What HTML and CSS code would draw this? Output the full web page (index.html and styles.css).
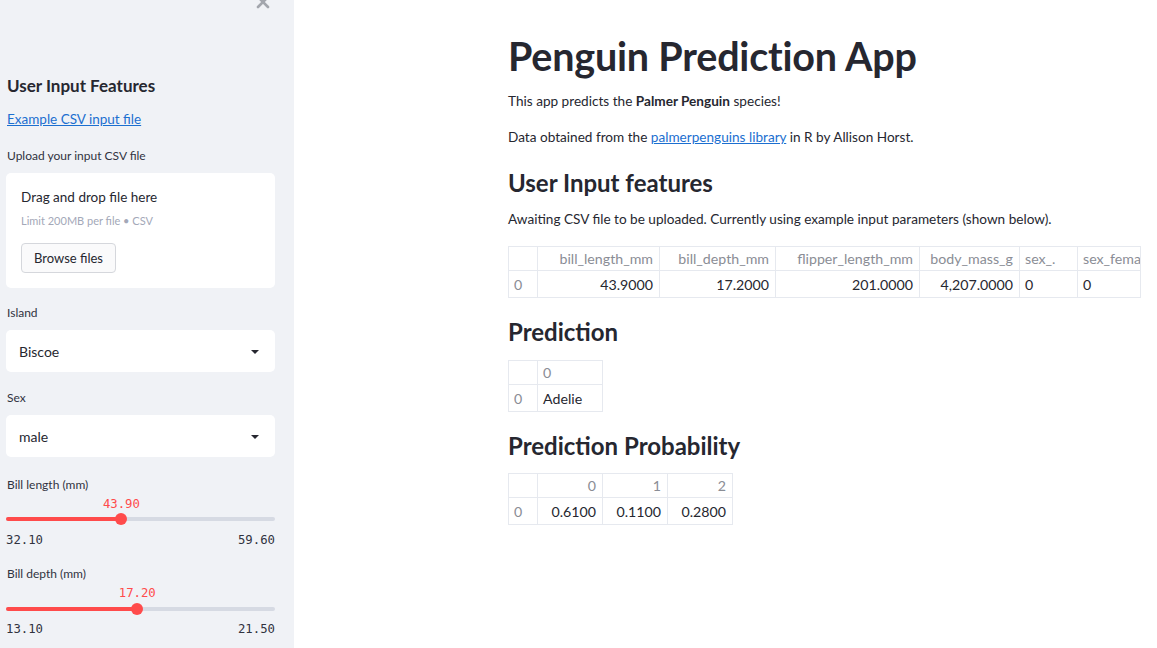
FILE: index.html
```html
<!DOCTYPE html>
<html>
<head>
<meta charset="utf-8">
<link rel="stylesheet" href="styles.css">
</head>
<body>
<div class="app">
  <aside class="sidebar">
    <div class="sb-head">
      <svg class="close" width="14" height="14" viewBox="0 0 14 14"><path d="M2 2 L12 12 M12 2 L2 12" stroke="#a3a6ad" stroke-width="2.6" stroke-linecap="round"/></svg>
    </div>
    <div class="sb-title">User Input Features</div>
    <a class="sb-link" href="#">Example CSV input file</a>
    <div class="label upload-label">Upload your input CSV file</div>
    <div class="upload">
      <div class="drop">Drag and drop file here</div>
      <div class="limit">Limit 200MB per file • CSV</div>
      <button class="browse">Browse files</button>
    </div>
    <div class="label field-label">Island</div>
    <div class="select"><span>Biscoe</span><span class="caret"></span></div>
    <div class="label field-label sex-label">Sex</div>
    <div class="select"><span>male</span><span class="caret"></span></div>
    <div class="label slider-label">Bill length (mm)</div>
    <div class="slider">
      <div class="val-row"><span class="val" style="left: 42.9%">43.90</span></div>
      <div class="track"><div class="fill" style="width: 42.9%"></div><span class="thumb" style="left: 42.9%"></span></div>
      <div class="minmax"><span>32.10</span><span>59.60</span></div>
    </div>
    <div class="label slider-label slider-label-2">Bill depth (mm)</div>
    <div class="slider">
      <div class="val-row"><span class="val" style="left: 48.8%">17.20</span></div>
      <div class="track track-2"><div class="fill" style="width: 48.8%"></div><span class="thumb" style="left: 48.8%"></span></div>
      <div class="minmax minmax-2"><span>13.10</span><span>21.50</span></div>
    </div>
  </aside>
  <main class="main">
    <h1 class="title">Penguin Prediction App</h1>
    <p class="p1">This app predicts the <b>Palmer Penguin</b> species!</p>
    <p class="p2">Data obtained from the <a href="#">palmerpenguins library</a> in R by Allison Horst.</p>
    <h2 class="h-input">User Input features</h2>
    <p class="p3">Awaiting CSV file to be uploaded. Currently using example input parameters (shown below).</p>
    <div class="df df-wide">
      <table>
        <colgroup>
          <col class="c-idx"><col class="c-bl"><col class="c-bd"><col class="c-fl"><col class="c-bm"><col class="c-sx"><col class="c-sf">
        </colgroup>
        <tr><th></th><th>bill_length_mm</th><th>bill_depth_mm</th><th>flipper_length_mm</th><th>body_mass_g</th><th class="l">sex_.</th><th class="l">sex_female</th></tr>
        <tr><td class="idx">0</td><td>43.9000</td><td>17.2000</td><td>201.0000</td><td>4,207.0000</td><td class="l">0</td><td class="l">0</td></tr>
      </table>
    </div>
    <h2 class="h-pred">Prediction</h2>
    <div class="df df-pred">
      <table>
        <colgroup><col class="c-idx"><col class="c-64"></colgroup>
        <tr><th></th><th class="l">0</th></tr>
        <tr><td class="idx">0</td><td class="l">Adelie</td></tr>
      </table>
    </div>
    <h2 class="h-prob">Prediction Probability</h2>
    <div class="df df-prob">
      <table>
        <colgroup><col class="c-idx"><col class="c-65"><col class="c-65"><col class="c-64"></colgroup>
        <tr><th></th><th>0</th><th>1</th><th>2</th></tr>
        <tr><td class="idx">0</td><td>0.6100</td><td>0.1100</td><td>0.2800</td></tr>
      </table>
    </div>
  </main>
</div>
</body>
</html>
```

FILE: styles.css
```css
* { box-sizing: border-box; }
html, body { margin: 0; padding: 0; }
body {
  font-family: "Lato", "Liberation Sans", sans-serif;
  color: #262730;
  background: #ffffff;
  width: 1157px;
  height: 648px;
  overflow: hidden;
}
.app { display: flex; height: 648px; }

/* Sidebar */
.sidebar {
  width: 294px;
  flex: none;
  background: #f0f2f6;
  height: 648px;
  overflow: hidden;
  padding: 0 19px 0 6px;
  display: flex;
  flex-direction: column;
}
.sb-head { display: flex; justify-content: flex-end; height: 10px; padding-right: 5px; }
.close { margin-top: -5px; }
.sb-title { font-size: 17px; font-weight: 700; line-height: 24px; margin-top: 64px; padding-left: 1px; }
.sb-link { font-size: 13.5px; line-height: 20px; margin-top: 11px; color: #1c6fd0; text-decoration: underline; padding-left: 1px; align-self: flex-start; }
.label { font-size: 12px; line-height: 16px; padding-left: 1px; color: #31333f; }
.upload-label { margin-top: 19px; }
.upload {
  margin-top: 9px;
  background: #ffffff;
  border-radius: 5px;
  padding: 14px 15px 15px;
  height: 115px;
  display: flex;
  flex-direction: column;
  align-items: flex-start;
}
.drop { font-size: 13.5px; line-height: 20px; }
.limit { font-size: 11px; line-height: 16px; margin-top: 6px; color: #a3a8b8; }
.browse {
  margin-top: 14px;
  height: 30px;
  width: 95px;
  font-family: inherit;
  font-size: 13px;
  color: #262730;
  background: #fafafb;
  border: 1px solid #d5d7dc;
  border-radius: 4px;
  padding: 0;
}
.field-label { margin-top: 17px; }
.sex-label { margin-top: 18px; }
.select {
  margin-top: 9px;
  height: 42px;
  background: #ffffff;
  border-radius: 5px;
  display: flex;
  align-items: center;
  justify-content: space-between;
  padding: 0 16px 0 13px;
  font-size: 14px;
}
.caret {
  width: 0; height: 0;
  border-left: 4px solid transparent;
  border-right: 4px solid transparent;
  border-top: 4px solid #262730;
  margin-top: 2px;
}
.slider-label { margin-top: 20px; }
.slider-label-2 { margin-top: 18px; }
.slider { display: flex; flex-direction: column; }
.val-row { position: relative; height: 16px; margin-top: 3px; }
.val {
  position: absolute;
  top: 0;
  transform: translateX(-50%);
  font-family: "DejaVu Sans Mono", monospace;
  font-size: 12.3px;
  line-height: 16px;
  color: #ff4b4b;
}
.track {
  position: relative;
  margin-top: 5px;
  height: 4px;
  background: #d6dae3;
  border-radius: 2px;
}
.track-2 { margin-top: 6px; }
.fill { height: 4px; background: #ff4b4b; border-radius: 2px; }
.thumb {
  position: absolute;
  top: -4px;
  width: 12px; height: 12px;
  margin-left: -6px;
  border-radius: 50%;
  background: #ff4b4b;
}
.minmax {
  display: flex;
  justify-content: space-between;
  margin-top: 11px;
  font-family: "DejaVu Sans Mono", monospace;
  font-size: 12.3px;
  line-height: 16px;
  color: #31333f;
}
.minmax-2 { margin-top: 10px; }

/* Main */
.main {
  flex: 1;
  padding-left: 214px;
  width: 863px;
  overflow: hidden;
}
.title { font-size: 39.5px; font-weight: 700; line-height: 52px; margin: 30px 0 0; letter-spacing: -0.2px; }
p { margin: 0; font-size: 13.6px; line-height: 20px; }
.p1 { margin-top: 9px; }
.p2 { margin-top: 16px; }
.p2 a { color: #1c6fd0; }
h2 { font-size: 24px; font-weight: 700; line-height: 34px; margin: 0; }
.h-input { margin-top: 19px; }
.p3 { margin-top: 9px; }
.h-pred { margin-top: 17px; }
.h-prob { margin-top: 17px; }

.df {
  border: 1px solid #e6e9ef;
  display: inline-block;
  vertical-align: top;
  overflow: hidden;
}
.df-wide { width: 633px; display: block; margin-top: 17px; }
.df-pred { margin-top: 11px; }
.df-prob { margin-top: 10px; }
.df table { border-collapse: separate; border-spacing: 0; table-layout: fixed; font-size: 14.2px; }
.df-wide table { width: 646px; }
.df th, .df td {
  border-right: 1px solid #e6e9ef;
  padding: 0 6px 0 5px;
  text-align: right;
  white-space: nowrap;
  overflow: hidden;
}
.df th { height: 24px; font-weight: 400; color: #8a8d95; border-bottom: 1px solid #e6e9ef; }
.df td { height: 26px; color: #262730; }
.df tr > *:last-child { border-right: none; }
.df .l { text-align: left; }
.df .idx { text-align: left; color: #8a8d95; }
.c-idx { width: 29px; }
.c-bl { width: 122px; }
.c-bd { width: 116px; }
.c-fl { width: 144px; }
.c-bm { width: 100px; }
.c-sx { width: 58px; }
.c-sf { width: 77px; }
.c-64 { width: 64px; }
.c-65 { width: 65px; }
```
